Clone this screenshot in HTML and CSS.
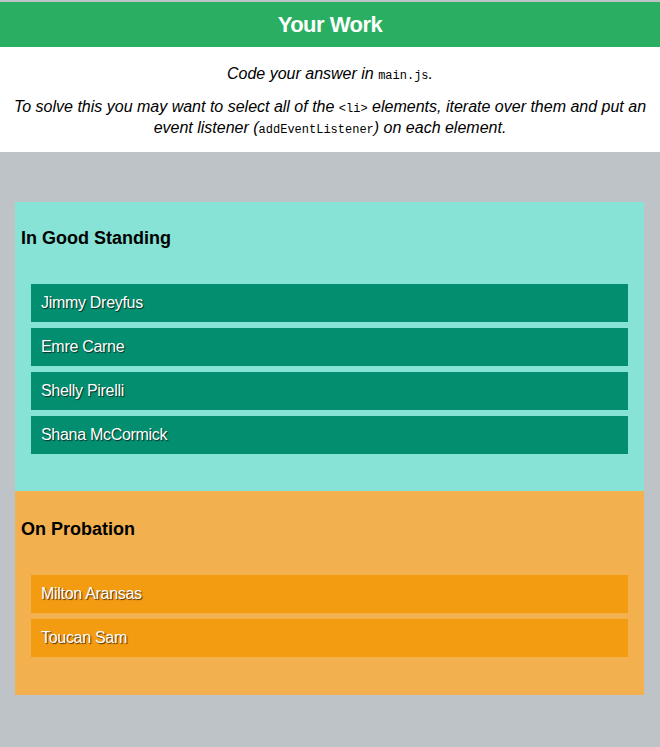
FILE: index.html
```html
<!DOCTYPE html>
<html>
<head>
<meta charset="utf-8">
<title>Your Work</title>
<link rel="stylesheet" href="styles.css">
</head>
<body>
<header class="topbar"><h1 class="title">Your Work</h1></header>
<section class="intro">
  <p>Code your answer in <code>main.js</code>.</p>
  <p>To solve this you may want to select all of the <code>&lt;li&gt;</code> elements, iterate over them and put an event listener (<code>addEventListener</code>) on each element.</p>
</section>
<main class="board">
  <section class="group good">
    <h2 class="group-title">In Good Standing</h2>
    <ul class="people">
      <li>Jimmy Dreyfus</li>
      <li>Emre Carne</li>
      <li>Shelly Pirelli</li>
      <li>Shana McCormick</li>
    </ul>
  </section>
  <section class="group probation">
    <h2 class="group-title">On Probation</h2>
    <ul class="people">
      <li>Milton Aransas</li>
      <li>Toucan Sam</li>
    </ul>
  </section>
</main>
</body>
</html>
```
FILE: styles.css
```css
html, body {
  margin: 0;
  padding: 0;
}
body {
  font-family: "Liberation Sans", Arial, sans-serif;
  background: #bdc3c7;
  min-height: 747px;
  color: #000;
}
.topbar {
  margin-top: 2px;
  height: 45px;
  background: #2aaf62;
  display: flex;
  align-items: center;
  justify-content: center;
}
.title {
  margin: 0;
  color: #fff;
  font-size: 22px;
  font-weight: bold;
  letter-spacing: -0.5px;
}
.intro {
  background: #fff;
  padding: 16px 8px 14px;
  display: flex;
  flex-direction: column;
  gap: 12px;
  text-align: center;
}
.intro p {
  margin: 0;
  font-style: italic;
  font-size: 16px;
  line-height: 21px;
}
.intro code {
  font-family: "Liberation Mono", "Courier New", monospace;
  font-style: normal;
  font-size: 12px;
  line-height: 1;
}
.board {
  padding: 50px 16px 52px 15px;
}
.group {
  padding: 25px 16px 37px 16px;
}
.good { background: #86e3d6; }
.probation { background: #f3b04f; padding-top: 27px; padding-bottom: 38px; }
.group-title {
  margin: 0 0 0 -10px;
  font-size: 18px;
  font-weight: bold;
  line-height: 22px;
}
.people {
  list-style: none;
  margin: 35px 0 0;
  padding: 0;
  display: flex;
  flex-direction: column;
  gap: 6px;
}
.probation .people { margin-top: 35px; }
.people li {
  height: 38px;
  display: flex;
  align-items: center;
  padding-left: 10px;
  color: #fff;
  font-size: 16px;
  text-shadow: 1px 1px 1px rgba(0,0,0,0.7);
  letter-spacing: -0.3px;
}
.good .people li { background: #038f6f; }
.probation .people li { background: #f39c12; }
```
